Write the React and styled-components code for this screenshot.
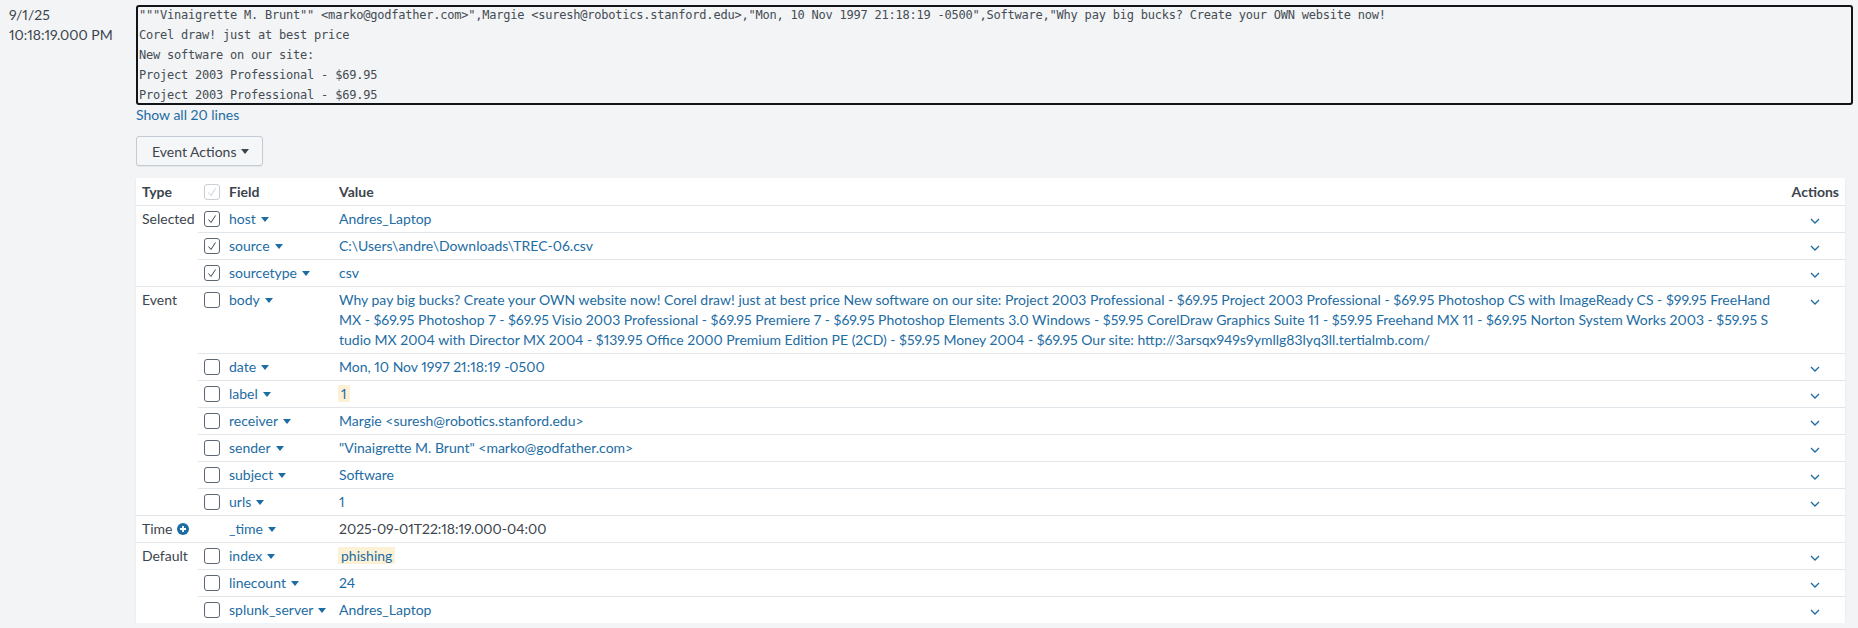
import React from "react";
import styled, { createGlobalStyle } from "styled-components";

const GlobalStyle = createGlobalStyle`
  html, body {
    margin: 0;
    padding: 0;
    background: #f2f4f5;
  }
  body {
    font-family: Lato, "Open Sans", sans-serif;
    font-size: 14px;
    font-variant-numeric: proportional-nums;
    color: #3c444d;
  }
`;

const BLUE = "#1d6ca3";

const EventWrap = styled.div`
  display: flex;
  align-items: flex-start;
  padding-right: 5px;
`;

const TimeCol = styled.div`
  width: 127px;
  flex: none;
  padding: 5px 0 0 9px;
  line-height: 20px;
  color: #3c444d;
`;

const Main = styled.div`
  flex: 1;
  min-width: 0;
  display: flex;
  flex-direction: column;
  align-items: flex-start;
`;

const RawBox = styled.pre`
  align-self: stretch;
  margin: 5px 0 0 0;
  padding: 0 0 0 3px;
  border-radius: 3px;
  box-shadow: inset 0 0 0 2px #111418;
  font-family: "DejaVu Sans Mono", "Liberation Mono", monospace;
  font-size: 12px;
  letter-spacing: -0.22px;
  line-height: 20px;
  color: #454c54;
  white-space: pre;
  overflow: hidden;
`;

const ShowAll = styled.a`
  color: ${BLUE};
  line-height: 20px;
  text-decoration: none;
  cursor: pointer;
`;

const ActionButton = styled.button`
  margin-top: 11px;
  height: 30px;
  padding: 0 13px 0 15px;
  display: flex;
  align-items: center;
  gap: 5px;
  background: #f5f6f7;
  border: 1px solid #c3cbd4;
  border-radius: 3px;
  box-shadow: 0 1px 1px rgba(0, 0, 0, 0.06);
  font-family: inherit;
  font-size: 14px;
  color: #3c444d;
`;

const FieldTable = styled.table`
  margin-top: 12px;
  width: calc(100% - 8px);
  table-layout: fixed;
  border-collapse: separate;
  border-spacing: 0;
  background: #ffffff;
  box-shadow: 0 1px 2px rgba(0, 0, 0, 0.08);
`;

const Th = styled.th`
  text-align: ${(p) => (p.$right ? "right" : "left")};
  font-weight: 700;
  color: #3c444d;
  line-height: 20px;
  padding: 4px 6px 3px 6px;
  vertical-align: top;
`;

const Td = styled.td`
  border-top: 1px solid #e1e6ea;
  line-height: 20px;
  padding: 3px 6px;
  vertical-align: top;
  color: ${(p) => (p.$plain ? "#3c444d" : BLUE)};
`;

const TypeTd = styled(Td)`
  color: #3c444d;
  white-space: nowrap;
`;

const CheckTd = styled(Td)`
  padding: 3px 0 0 6px;
`;

const ValueTd = styled(Td)`
  word-break: break-all;
`;

const ActionTd = styled(Td)`
  text-align: right;
  padding-right: 25px;
`;

const Box = styled.span`
  display: block;
  width: 16px;
  height: 16px;
  margin-top: 2px;
  box-sizing: border-box;
  border: 1px solid ${(p) => (p.$disabled ? "#c9d0d6" : "#5c6773")};
  border-radius: 3px;
  background: #fff;
  svg {
    display: block;
  }
`;

const FieldName = styled.span`
  display: inline-flex;
  align-items: center;
  gap: 5px;
  color: ${BLUE};
  white-space: nowrap;
`;

const Highlight = styled.span`
  background: #fcf1d5;
  padding: 0 3px;
  margin-left: -1px;
`;

const TypeLabel = styled.span`
  display: inline-flex;
  align-items: center;
  gap: 4px;
`;

const Caret = ({ color = BLUE }) => (
  <svg width="8" height="5" viewBox="0 0 8 5">
    <polygon points="0,0 8,0 4,5" fill={color} />
  </svg>
);

const Chevron = () => (
  <svg width="10" height="6" viewBox="0 0 10 6" style={{ marginTop: 8 }}>
    <polyline
      points="1,1 5,5 9,1"
      fill="none"
      stroke={BLUE}
      strokeWidth="1.3"
    />
  </svg>
);

const PlusCircle = () => (
  <svg width="12" height="12" viewBox="0 0 12 12">
    <circle cx="6" cy="6" r="6" fill={BLUE} />
    <path d="M6 3v6M3 6h6" stroke="#fff" strokeWidth="1.8" />
  </svg>
);

const Checkbox = ({ checked, disabled }) => (
  <Box $disabled={disabled}>
    {checked && (
      <svg width="14" height="14" viewBox="0 0 14 14">
        <polyline
          points="3.5,7.5 6,10.5 10.5,3.5"
          fill="none"
          stroke={disabled ? "#c9d0d6" : "#3c444d"}
          strokeWidth="1"
        />
      </svg>
    )}
  </Box>
);

const body =
  "Why pay big bucks? Create your OWN website now! Corel draw! just at best price New software on our site: Project 2003 Professional - $69.95 Project 2003 Professional - $69.95 Photoshop CS with ImageReady CS - $99.95 FreeHand MX - $69.95 Photoshop 7 - $69.95 Visio 2003 Professional - $69.95 Premiere 7 - $69.95 Photoshop Elements 3.0 Windows - $59.95 CorelDraw Graphics Suite 11 - $59.95 Freehand MX 11 - $69.95 Norton System Works 2003 - $59.95 Studio MX 2004 with Director MX 2004 - $139.95 Office 2000 Premium Edition PE (2CD) - $59.95 Money 2004 - $69.95 Our site: http://3arsqx949s9ymllg83lyq3ll.tertialmb.com/";

const groups = [
  {
    type: "Selected",
    rows: [
      { field: "host", value: "Andres_Laptop", checked: true },
      { field: "source", value: "C:\\Users\\andre\\Downloads\\TREC-06.csv", checked: true },
      { field: "sourcetype", value: "csv", checked: true },
    ],
  },
  {
    type: "Event",
    rows: [
      { field: "body", value: body },
      { field: "date", value: "Mon, 10 Nov 1997 21:18:19 -0500" },
      { field: "label", value: "1", hl: true },
      { field: "receiver", value: "Margie <suresh@robotics.stanford.edu>" },
      { field: "sender", value: '"Vinaigrette M. Brunt" <marko@godfather.com>' },
      { field: "subject", value: "Software" },
      { field: "urls", value: "1" },
    ],
  },
  {
    type: "Time",
    icon: true,
    rows: [
      {
        field: "_time",
        value: "2025-09-01T22:18:19.000-04:00",
        noCheck: true,
        plain: true,
        noAction: true,
      },
    ],
  },
  {
    type: "Default",
    rows: [
      { field: "index", value: "phishing", hl: true },
      { field: "linecount", value: "24" },
      { field: "splunk_server", value: "Andres_Laptop" },
    ],
  },
];

const rawLines = [
  '"""Vinaigrette M. Brunt"" <marko@godfather.com>",Margie <suresh@robotics.stanford.edu>,"Mon, 10 Nov 1997 21:18:19 -0500",Software,"Why pay big bucks? Create your OWN website now!',
  "Corel draw! just at best price",
  "New software on our site:",
  "Project 2003 Professional - $69.95",
  "Project 2003 Professional - $69.95",
];

function FieldRows() {
  return groups.map((g) =>
    g.rows.map((r, i) => (
      <tr key={g.type + r.field}>
        {i === 0 && (
          <TypeTd rowSpan={g.rows.length}>
            <TypeLabel>
              {g.type}
              {g.icon && <PlusCircle />}
            </TypeLabel>
          </TypeTd>
        )}
        <CheckTd>{!r.noCheck && <Checkbox checked={r.checked} />}</CheckTd>
        <Td>
          <FieldName>
            {r.field}
            <Caret />
          </FieldName>
        </Td>
        <ValueTd $plain={r.plain}>
          {r.hl ? <Highlight>{r.value}</Highlight> : r.value}
        </ValueTd>
        <ActionTd>{!r.noAction && <Chevron />}</ActionTd>
      </tr>
    ))
  );
}

export default function App() {
  return (
    <>
      <GlobalStyle />
      <EventWrap>
        <TimeCol>
          <div>9/1/25</div>
          <div>10:18:19.000 PM</div>
        </TimeCol>
        <Main>
          <RawBox>{rawLines.join("\n")}</RawBox>
          <ShowAll>Show all 20 lines</ShowAll>
          <ActionButton>
            Event Actions
            <Caret color="#3c444d" />
          </ActionButton>
          <FieldTable>
            <colgroup>
              <col style={{ width: 62 }} />
              <col style={{ width: 25 }} />
              <col style={{ width: 110 }} />
              <col />
              <col style={{ width: 68 }} />
            </colgroup>
            <thead>
              <tr>
                <Th>Type</Th>
                <Th style={{ padding: "4px 0 0 6px" }}>
                  <Checkbox checked disabled />
                </Th>
                <Th>Field</Th>
                <Th>Value</Th>
                <Th $right>Actions</Th>
              </tr>
            </thead>
            <tbody>
              <FieldRows />
            </tbody>
          </FieldTable>
        </Main>
      </EventWrap>
    </>
  );
}
